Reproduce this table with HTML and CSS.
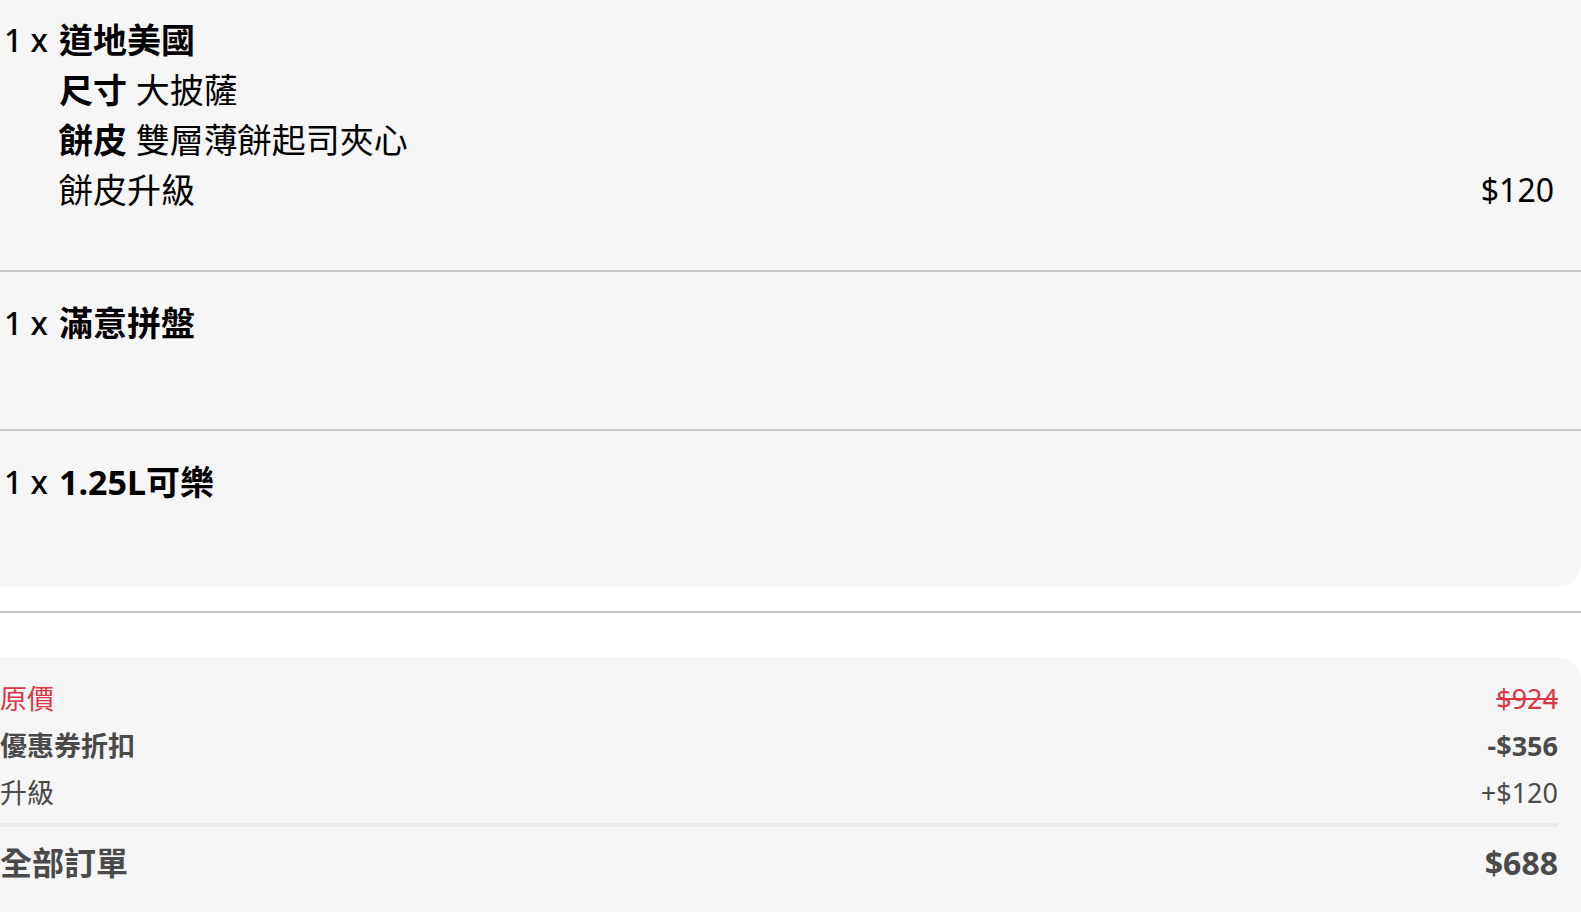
FILE: index.html
```html
<!DOCTYPE html>
<html lang="zh-Hant">
<head>
<meta charset="utf-8">
<title>訂單</title>
<link rel="stylesheet" href="styles.css">
</head>
<body>
<div class="page">
  <section class="items">
    <div class="item">
      <div class="qty">1 x</div>
      <div class="body">
        <div class="name">道地美國</div>
        <div class="opt"><b>尺寸</b> 大披薩</div>
        <div class="opt"><b>餅皮</b> 雙層薄餅起司夾心</div>
        <div class="opt row"><span>餅皮升級</span><span class="price">$120</span></div>
      </div>
    </div>
    <div class="item">
      <div class="qty">1 x</div>
      <div class="body">
        <div class="name">滿意拼盤</div>
      </div>
    </div>
    <div class="item">
      <div class="qty">1 x</div>
      <div class="body">
        <div class="name">1.25L可樂</div>
      </div>
    </div>
  </section>
  <hr class="sep">
  <section class="summary">
    <div class="srow red"><span>原價</span><s>$924</s></div>
    <div class="srow bold"><span>優惠券折扣</span><span>-$356</span></div>
    <div class="srow"><span>升級</span><span>+$120</span></div>
    <div class="total"><span>全部訂單</span><span>$688</span></div>
  </section>
</div>
</body>
</html>
```

FILE: styles.css
```css
html, body {
  margin: 0;
  padding: 0;
  background: #ffffff;
  overflow: hidden;
}
body {
  font-family: "Noto Sans", "Noto Sans CJK TC", sans-serif;
  color: #000;
}
.page {
  margin: -40px 0 0 -16px;
}
.items {
  background: #f6f6f6;
  border-radius: 24px;
  padding: 29px 27px 0 18px;
}
.item {
  display: grid;
  grid-template-columns: auto 1fr;
  column-gap: 11px;
  padding-top: 26px;
  min-height: 159px;
  box-sizing: border-box;
  margin: 0 -27px 0 -18px;
  padding-left: 18px;
  padding-right: 27px;
  padding-bottom: 55px;
  border-bottom: 2px solid #c8c8ca;
}
.item:last-child {
  border-bottom: 0;
  min-height: 156px;
}
.qty {
  font-size: 32px;
  line-height: 50px;
  padding-left: 2px;
  font-weight: 500;
}
.name {
  font-size: 34px;
  line-height: 50px;
  font-weight: 700;
}
.opt {
  font-size: 34px;
  line-height: 50px;
}
.opt b {
  font-weight: 700;
}
.price {
  font-size: 32px;
}
.row {
  display: flex;
  justify-content: space-between;
  align-items: center;
  height: 50px;
}
.sep {
  border: 0;
  height: 2px;
  background: #c6c5ca;
  margin: 24px 0 44px;
}
.summary {
  background: #f6f6f6;
  border-radius: 24px;
  padding: 18px 23px 60px 16px;
  color: #4a4a4a;
}
.srow {
  display: flex;
  justify-content: space-between;
  font-size: 27px;
  line-height: 47px;
}
.srow.red {
  color: #dc3545;
}
.srow.bold {
  font-weight: 700;
}
.total {
  display: flex;
  justify-content: space-between;
  font-size: 32px;
  line-height: 50px;
  font-weight: 700;
  border-top: 4px solid #ebebeb;
  margin-top: 7px;
  padding-top: 11px;
}
```
